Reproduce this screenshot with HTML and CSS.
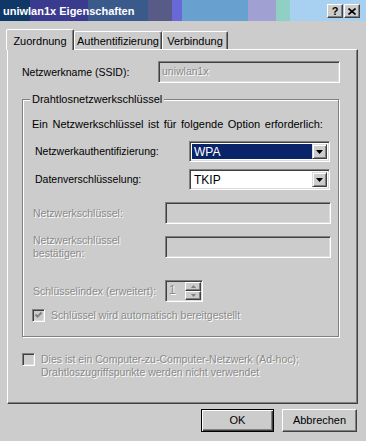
FILE: index.html
```html
<!DOCTYPE html>
<html lang="de">
<head>
<meta charset="utf-8">
<title>uniwlan1x Eigenschaften</title>
<link rel="stylesheet" href="styles.css">
</head>
<body>
<div class="window">
  <div class="titlebar">
    <span class="title">uniwlan1x Eigenschaften</span>
    <div class="tb-buttons">
      <span class="tb-btn help">?</span>
      <span class="tb-btn close"><svg width="8" height="7" viewBox="0 0 8 7"><path d="M0.5 0.5 L7.5 6.5 M7.5 0.5 L0.5 6.5" stroke="#000" stroke-width="1.6" fill="none"/></svg></span>
    </div>
  </div>

  <div class="tabs">
    <div class="tab active w-zu">Zuordnung</div>
    <div class="tab w-au">Authentifizierung</div>
    <div class="tab w-ve">Verbindung</div>
  </div>

  <div class="panel">
    <div class="row ssid">
      <span class="lbl l-ssid">Netzwerkname (SSID):</span>
      <div class="field disabled f-ssid"><span class="dtext">uniwlan1x</span></div>
    </div>

    <fieldset class="group">
      <legend>Drahtlosnetzwerkschlüssel</legend>
      <p class="intro">Ein Netzwerkschlüssel ist für folgende Option erforderlich:</p>

      <div class="row r-auth">
        <span class="lbl l-combo">Netzwerkauthentifizierung:</span>
        <div class="combo">
          <span class="val selected">WPA</span>
          <span class="drop"><svg width="7" height="4" viewBox="0 0 7 4"><path d="M0 0 H7 L3.5 4 Z" fill="#000"/></svg></span>
        </div>
      </div>

      <div class="row r-daten">
        <span class="lbl l-combo">Datenverschlüsselung:</span>
        <div class="combo">
          <span class="val">TKIP</span>
          <span class="drop"><svg width="7" height="4" viewBox="0 0 7 4"><path d="M0 0 H7 L3.5 4 Z" fill="#000"/></svg></span>
        </div>
      </div>

      <div class="row r-key">
        <span class="lbl l-key dtext">Netzwerkschlüssel:</span>
        <div class="field disabled f-key"></div>
      </div>

      <div class="row r-confirm">
        <span class="lbl l-key dtext">Netzwerkschlüssel<br>bestätigen:</span>
        <div class="field disabled f-key"></div>
      </div>

      <div class="row r-index">
        <span class="lbl l-key dtext">Schlüsselindex (erweitert):</span>
        <div class="spin">
          <div class="field disabled f-spin"><span class="dtext">1</span></div>
          <div class="spin-btns">
            <span class="sbtn"><svg width="5" height="3" viewBox="0 0 5 3"><path d="M2.5 0 L5 3 H0 Z" fill="#808080"/></svg></span>
            <span class="sbtn"><svg width="5" height="3" viewBox="0 0 5 3"><path d="M0 0 H5 L2.5 3 Z" fill="#808080"/></svg></span>
          </div>
        </div>
      </div>

      <div class="check r-auto">
        <span class="cbox"><svg width="9" height="9" viewBox="0 0 9 9"><path d="M1.5 3.5 L3.5 5.6 L7.6 1.5" stroke="#808080" stroke-width="1.9" fill="none"/></svg></span>
        <span class="dtext">Schlüssel wird automatisch bereitgestellt</span>
      </div>
    </fieldset>

    <div class="check adhoc">
      <span class="cbox"></span>
      <span class="dtext">Dies ist ein Computer-zu-Computer-Netzwerk (Ad-hoc);<br>Drahtloszugriffspunkte werden nicht verwendet</span>
    </div>
  </div>

  <div class="actions">
    <button class="btn default b-ok">OK</button>
    <button class="btn b-cancel">Abbrechen</button>
  </div>
</div>
</body>
</html>
```

FILE: styles.css
```css
* { box-sizing: border-box; }

body {
  margin: 0;
  background: #cccccc;
  font: 11px/13px "Liberation Sans", Arial, sans-serif;
  color: #000;
}

.window {
  width: 366px;
  height: 441px;
  overflow: hidden;
  background: #cccccc;
}

/* Title bar */
.titlebar {
  height: 21px;
  display: flex;
  align-items: flex-start;
  justify-content: space-between;
  background: linear-gradient(to right,
    #0f3866 0 30px,
    #3a3a8e 30px 88px,
    #3b5a8c 88px 148px,
    #585a88 148px 172px,
    #6868d6 172px 182px,
    #68a0d0 182px 248px,
    #a0a0d2 248px 276px,
    #90d0c4 276px 290px,
    #a8d0f0 290px);
}
.title {
  color: #fff;
  font-weight: bold;
  font-size: 11px;
  line-height: 13px;
  padding: 5px 0 0 3px;
}
.tb-buttons {
  display: flex;
  gap: 1px;
  margin: 4px 6px 0 0;
}
.tb-btn {
  width: 16px;
  height: 14px;
  display: flex;
  align-items: center;
  justify-content: center;
  background: #cccccc;
  border: 1px solid;
  border-color: #ffffff #404040 #404040 #ffffff;
  box-shadow: inset -1px -1px #808080;
}
.help {
  font-weight: bold;
  font-size: 11px;
  line-height: 11px;
}

/* Tabs */
.tabs {
  display: flex;
  align-items: flex-end;
  height: 20px;
  margin-top: 8px;
  padding-left: 6px;
  position: relative;
  z-index: 1;
}
.tab {
  height: 18px;
  padding-top: 3px;
  text-align: center;
  background: #cccccc;
  border-top: 1px solid #ffffff;
  border-left: 1px solid #ffffff;
  border-right: 1px solid #404040;
  border-radius: 2px 2px 0 0;
  box-shadow: inset -1px 0 #808080;
}
.tab.active {
  height: 21px;
  margin-bottom: -1px;
  padding-top: 5px;
}
.w-zu { width: 68px; }
.w-au { width: 88px; }
.w-ve { width: 66px; }

/* Panel */
.panel {
  margin-left: 7px;
  width: 351px;
  height: 355px;
  border: 1px solid;
  border-color: #ffffff #404040 #404040 #ffffff;
  box-shadow: inset -1px -1px #808080;
  padding: 11px 0 0 14px;
}

.row {
  display: flex;
  align-items: center;
}
.lbl { flex: none; font-size: 10.5px; }
.l-ssid { width: 136px; }
.l-combo { width: 157px; padding-left: 3px; }
.l-key { width: 133px; padding-left: 1px; }

.dtext {
  color: #8a8a8a;
  text-shadow: 1px 1px 0 #ffffff;
}

.field {
  height: 22px;
  border: 1px solid;
  border-color: #808080 #ffffff #ffffff #808080;
  box-shadow: inset 1px 1px #404040, inset -1px -1px #dcdcdc;
  background: #ffffff;
  padding: 3px 0 0 3px;
  font-size: 10.5px;
}
.field.disabled { background: #cccccc; }
.f-ssid { width: 182px; }
.f-key { width: 166px; }

/* Group box */
.group {
  margin: 10px 0 0 0;
  width: 317px;
  min-width: 0;
  height: 244px;
  padding: 0 0 0 9px;
  border: 1px solid #808080;
  box-shadow: inset 1px 1px #ffffff, 1px 1px #ffffff;
}
.group legend {
  padding: 0 2px;
  margin-left: -2px;
  background: #cccccc;
  line-height: 13px;
}
.intro {
  margin: 12px 0 0 0;
  word-spacing: 1.5px;
}
.r-auth { margin-top: 10px; }
.r-daten { margin-top: 7px; }
.r-key { margin-top: 12px; }
.r-confirm { margin-top: 10px; }
.r-index { margin-top: 20px; }
.r-auto { margin-top: 7px; }

.combo {
  width: 141px;
  height: 21px;
  display: flex;
  border: 1px solid;
  border-color: #808080 #ffffff #ffffff #808080;
  box-shadow: inset 1px 1px #404040, inset -1px -1px #dcdcdc;
  background: #ffffff;
  padding: 2px 2px 2px 2px;
}
.val {
  flex: 1;
  padding: 2px 0 0 2px;
  font-size: 12px;
}
.val.selected {
  background: #0a246a;
  color: #ffffff;
}
.drop {
  width: 15px;
  flex: none;
  display: flex;
  align-items: center;
  justify-content: center;
  background: #cccccc;
  border: 1px solid;
  border-color: #dcdcdc #404040 #404040 #dcdcdc;
  box-shadow: inset 1px 1px #ffffff, inset -1px -1px #808080;
}

/* Spin */
.spin {
  display: flex;
  width: 38px;
  height: 22px;
  position: relative;
}
.f-spin {
  width: 38px;
  padding-top: 3px;
  font-size: 12px;
}
.spin-btns {
  position: absolute;
  right: 2px;
  top: 2px;
  bottom: 2px;
  width: 16px;
  display: flex;
  flex-direction: column;
}
.sbtn {
  flex: 1;
  display: flex;
  align-items: center;
  justify-content: center;
  background: #cccccc;
  border: 1px solid;
  border-color: #ffffff #404040 #404040 #ffffff;
  box-shadow: inset -1px -1px #808080;
}

/* Checkboxes */
.check {
  display: flex;
  align-items: flex-start;
  gap: 6px;
  font-size: 10.5px;
}
.cbox {
  flex: none;
  width: 13px;
  height: 13px;
  display: flex;
  align-items: center;
  justify-content: center;
  border: 1px solid;
  border-color: #808080 #ffffff #ffffff #808080;
  box-shadow: inset 1px 1px #404040, inset -1px -1px #dcdcdc;
  background: #cccccc;
}
.adhoc { margin-top: 16px; }

/* Buttons */
.actions {
  display: flex;
  justify-content: flex-end;
  gap: 8px;
  margin-top: 5px;
  padding-right: 9px;
}
.btn {
  height: 23px;
  font: 11px/13px "Liberation Sans", Arial, sans-serif;
  color: #000;
  background: #cccccc;
  border: 1px solid;
  border-color: #ffffff #404040 #404040 #ffffff;
  box-shadow: inset -1px -1px #808080;
  padding: 0;
}
.btn.default {
  border-color: #000;
  box-shadow: inset 1px 1px #ffffff, inset -1px -1px #404040, inset -2px -2px #808080;
}
.b-ok { width: 73px; }
.b-cancel { width: 75px; }
```
